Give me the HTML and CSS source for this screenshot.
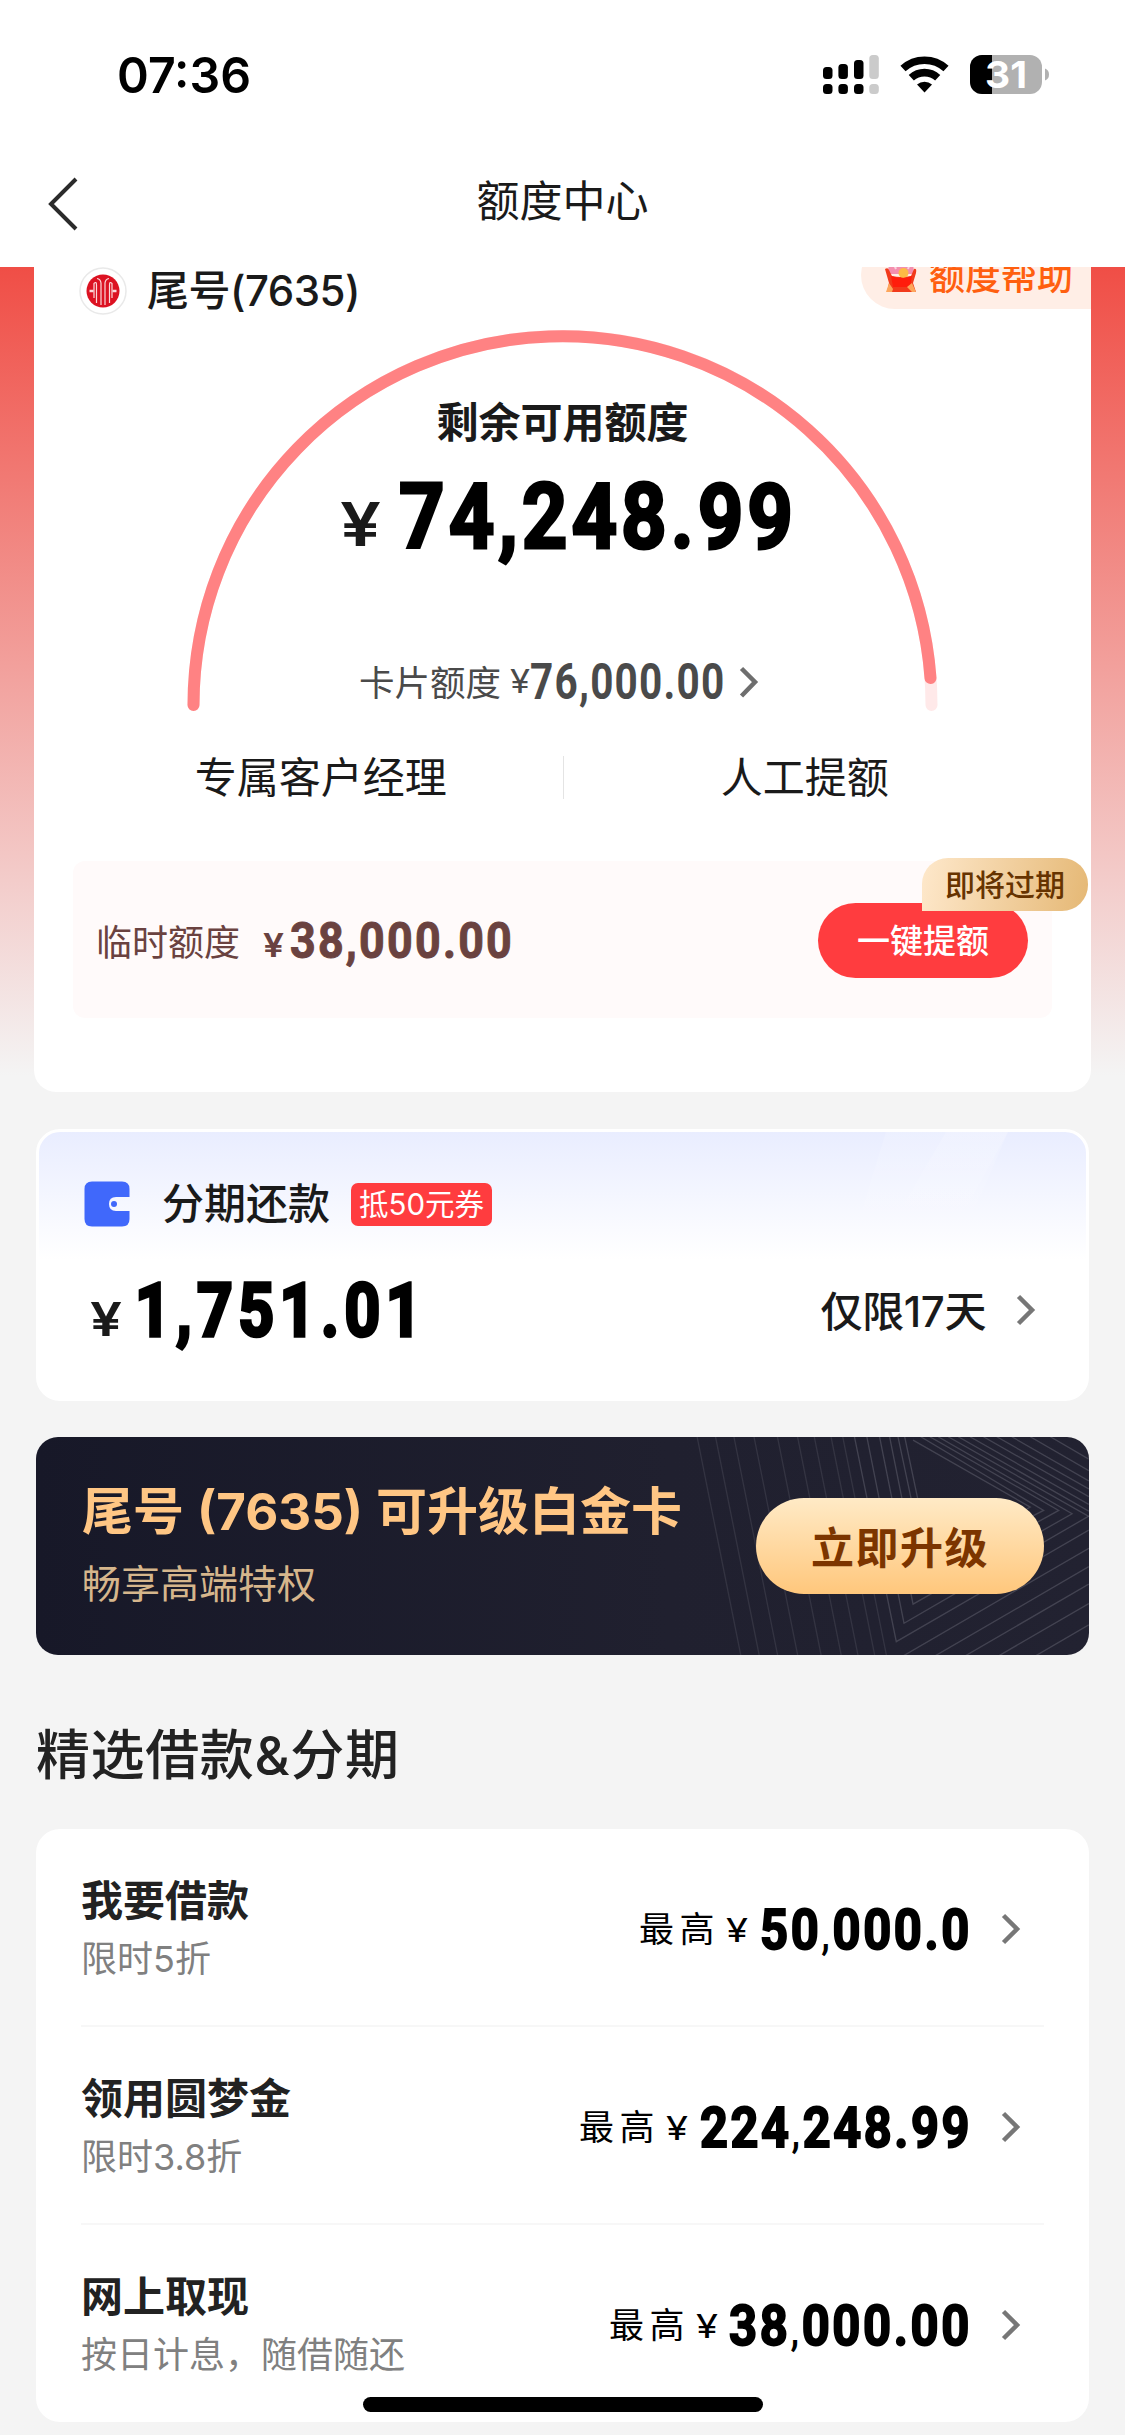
FILE: index.html
```html
<!DOCTYPE html>
<html lang="zh-CN">
<head>
<meta charset="utf-8">
<title>额度中心</title>
<link rel="stylesheet" href="styles.css">
</head>
<body>
<header class="top">
  <div class="status">
    <svg class="clock" width="140" height="60" viewBox="0 0 140 60"><text class="sf" x="2" y="48" font-size="50" font-weight="600" textLength="134" lengthAdjust="spacingAndGlyphs">07:36</text></svg>
    <svg class="indicators" width="232" height="48" viewBox="820 50 232 48">
      <g fill="#000">
        <rect x="823" y="67" width="9.5" height="12" rx="3.5"/><rect x="838.4" y="64" width="9.5" height="15" rx="3.5"/><rect x="854" y="60" width="9.5" height="19" rx="3.5"/>
        <rect x="823" y="84" width="9.5" height="10" rx="3.5"/><rect x="838.4" y="84" width="9.5" height="10" rx="3.5"/><rect x="854" y="84" width="9.5" height="10" rx="3.5"/>
      </g>
      <g fill="#cbcbcb"><rect x="869.3" y="55" width="9.5" height="24" rx="3.5"/><rect x="869.3" y="84" width="9.5" height="10" rx="3.5"/></g>
      <g fill="none" stroke="#000" stroke-width="7.6"><path d="M903 68.5A32 32 0 0 1 946 68.5"/><path d="M911.3 77.8A19.5 19.5 0 0 1 937.700 77.800"/></g>
      <path d="M917 84.500A11.500 11.500 0 0 1 932 84.500L924.500 92.500Z"/>
      <clipPath id="cell"><rect x="970" y="55" width="72" height="39" rx="12"/></clipPath>
      <g clip-path="url(#cell)"><rect x="970" y="55" width="72" height="39" fill="#b1b1b1"/><rect x="970" y="55" width="22" height="39"/></g>
      <path d="M1045 68.500Q1049 70 1049 74.500T1045 80.500Z" fill="#b1b1b1"/>
      <text class="sf" x="985" y="88" font-size="37" font-weight="700" fill="#fff" textLength="42" lengthAdjust="spacingAndGlyphs">31</text>
    </svg>
  </div>
  <nav class="nav">
    <svg class="back" width="34" height="58" viewBox="0 0 34 58"><path d="M31 4 6 29 31 54" fill="none" stroke="#2b2b2b" stroke-width="4"/></svg>
    <h1 class="nav-title">额度中心</h1>
  </nav>
</header>

<main>
  <section class="hero">
    <div class="card credit">
      <div class="account">
        <svg class="logo" width="48" height="48" viewBox="0 0 48 48">
          <circle cx="24" cy="24" r="23" fill="#fff" stroke="#e9e9e9" stroke-width="1.500"/>
          <circle cx="24" cy="24" r="16.500" fill="#dc1222"/>
          <g fill="none" stroke="#fbd9db" stroke-width="1.200"><path d="M17.500 36V18Q17.500 14 15 16.500V31"/><path d="M22 38V16Q21.500 12 18 11.500"/><path d="M26 38V16Q26.500 12 30 11.500"/><path d="M30.500 36V18Q30.500 14 33 16.500V31"/><path d="M10.500 24h4M33.500 24h4" stroke-width="2.500"/></g>
        </svg>
        <span class="account-name">尾号(7635)</span>
        <a class="help">
          <svg width="32" height="32" viewBox="0 0 32 32">
            <path d="M4 0H28L29 13H3Z" fill="#f48fae"/><path d="M8 1l3 7M14 0v6M26 0l-3 8" stroke="#fbd3de" stroke-width="2"/>
            <path d="M0 8Q3 6 4 9L7 15Q16 17 26 15L29 8Q32 7 31 12L28 22L31 31H2L4 22Z" fill="#f23a1c"/>
            <circle cx="18.500" cy="12" r="5" fill="#fdbb45"/><path d="M6 15Q17 19 27 15L25 26H8Z" fill="#ff1d0c"/><path d="M1 31 4 22 8 28 7 31ZM31 31 27 22 22 26 27 31Z" fill="#fda65c"/>
          </svg>
          <span>额度帮助</span>
        </a>
      </div>
      <div class="gauge">
        <svg class="gauge-arc" width="1057" height="406" viewBox="34 314 1057 406">
          <g fill="none" stroke-width="12" stroke-linecap="round"><path d="M193.500 705A369 369 0 0 1 931.500 705" stroke="#ffe9e9"/><path d="M193.500 705A369 369 0 0 1 930.500 678" stroke="#ff8283"/></g>
        </svg>
        <div class="gauge-body">
          <div class="gauge-title">剩余可用额度</div>
          <svg class="amount-main" width="470" height="90" viewBox="330 471 470 90"><text class="sf" x="340" y="546" font-size="60" font-weight="600" fill="#1a1a1a" textLength="41" lengthAdjust="spacingAndGlyphs">¥</text><text class="din heavy" x="399" y="548" font-size="91" stroke-width="3" letter-spacing="4.500" textLength="398" lengthAdjust="spacingAndGlyphs">74,248.99</text></svg>
          <div class="limit">
            <span>卡片额度</span>
            <svg width="260" height="60" viewBox="506 652 260 60"><text class="sf" x="510" y="693" font-size="32" fill="#4a4a4a" textLength="20" lengthAdjust="spacingAndGlyphs">¥</text><text class="din" x="530" y="699" font-size="49.500" fill="#4a4a4a" letter-spacing="1.500" textLength="195.500" lengthAdjust="spacingAndGlyphs">76,000.00</text><path d="M741.500 668.500 755 682 741.500 696" fill="none" stroke="#6e6e6e" stroke-width="4.500"/></svg>
          </div>
        </div>
      </div>
      <div class="tabs"><a class="tab">专属客户经理</a><a class="tab">人工提额</a></div>
      <div class="temp">
        <span class="temp-label">临时额度</span>
        <svg width="256" height="60" viewBox="260 911 256 60"><text class="sf" x="263" y="957" font-size="33" font-weight="600" fill="#6a4240" textLength="21" lengthAdjust="spacingAndGlyphs">¥</text><text class="din heavy" x="290" y="957.500" font-size="50" stroke-width="1" letter-spacing="2.500" textLength="224" lengthAdjust="spacingAndGlyphs">38,000.00</text></svg>
        <button class="raise">一键提额</button>
        <span class="expiring">即将过期</span>
      </div>
    </div>
  </section>

  <section class="card instalment">
    <svg class="shine" width="300" height="130" viewBox="0 0 300 130"><defs><linearGradient id="ray" x1="0" y1="0" x2="0" y2="1"><stop offset="0" stop-color="#fff" stop-opacity=".16"/><stop offset="1" stop-color="#fff" stop-opacity="0"/></linearGradient></defs><path d="M100 0H222L150 130H60Z" fill="url(#ray)"/><path d="M160 0H222L170 120H90Z" fill="url(#ray)"/></svg>
    <div class="inst-head">
      <svg width="46" height="46" viewBox="0 0 46 46"><path d="M8 .5H38Q45.500 .5 45.500 8V16H32Q25 16 25 23T32 30H45.500V38Q45.500 45.500 38 45.500H8Q.5 45.500 .5 38V8Q.5 .5 8 .5Z" fill="#4068fb"/><circle cx="30" cy="23" r="3" fill="#4068fb"/></svg>
      <h2 class="inst-title">分期还款</h2>
      <span class="coupon">抵50元券</span>
    </div>
    <div class="inst-foot">
      <svg width="340" height="90" viewBox="84 1265 340 90"><text class="sf" x="90" y="1336" font-size="47" font-weight="600" fill="#1a1a1a" textLength="32" lengthAdjust="spacingAndGlyphs">¥</text><text class="din heavy" x="135" y="1336" font-size="74" stroke-width="3.500" letter-spacing="6.500" textLength="292" lengthAdjust="spacingAndGlyphs">1,751.01</text></svg>
      <span class="days">仅限17天</span>
      <svg class="chev" width="20" height="36" viewBox="0 0 20 36"><path d="M2.500 4.500 16 18 2.500 31.500" fill="none" stroke="#777" stroke-width="4.500"/></svg>
    </div>
  </section>

  <section class="upgrade">
    <svg class="weave" width="1053" height="218" viewBox="0 0 1053 218">
      <g transform="translate(564 -17) scale(.3348)" fill="none" stroke="#8a8a94" stroke-opacity=".32" stroke-width="4">
        <path stroke-opacity=".18" d="M290 50 421 705M345 50 476 705M400 50 531 705M460 50 591 705M530 50 661 705M590 50 721 705M640 50 771 705M690 50 821 705M725 50 856 705"/>
        <path d="M760 50 885 662 1460 329M797 50 908 607 1460 287M835 50 935 550 1410 280 1010 50M865 50 955 500 1370 270 985 50M890 50 975 450 1325 270 958 50M910 50 990 430 1285 260 935 60"/>
        <path d="M905 705 1460 383M1000 705 1460 438M1090 705 1460 490M1190 705 1460 548M1300 705 1460 612"/>
        <path d="M1040 50 1460 288M1070 50 1460 272M1105 50 1460 252M1145 50 1460 229M1185 50 1460 206M1230 50 1460 182M1285 50 1460 151M1345 50 1460 117"/>
      </g>
    </svg>
    <div class="upgrade-text">
      <h2 class="upgrade-title">尾号 (7635) 可升级白金卡</h2>
      <p class="upgrade-sub">畅享高端特权</p>
    </div>
    <button class="upgrade-btn">立即升级</button>
  </section>

  <h2 class="section-title">精选借款&amp;分期</h2>

  <section class="list">
    <div class="row">
      <div><h3 class="row-title">我要借款</h3><p class="row-sub">限时5折</p></div>
      <div class="row-end"><span class="most">最高</span>
        <svg width="244" height="60" viewBox="725 1898 244 60"><text class="sf" x="726" y="1941" font-size="33" textLength="22" lengthAdjust="spacingAndGlyphs">¥</text><text class="din heavy" x="760" y="1947.500" font-size="56" stroke-width="2" letter-spacing="3" textLength="212" lengthAdjust="spacingAndGlyphs">50<tspan class="sep">,</tspan>000.0</text></svg>
        <svg class="chev" width="20" height="36" viewBox="0 0 20 36"><path d="M2.500 4.500 16 18 2.500 31.500" fill="none" stroke="#777" stroke-width="4.500"/></svg></div>
    </div>
    <div class="row">
      <div><h3 class="row-title">领用圆梦金</h3><p class="row-sub">限时3.8折</p></div>
      <div class="row-end"><span class="most">最高</span>
        <svg width="304" height="60" viewBox="665 1898 304 60"><text class="sf" x="666" y="1941" font-size="33" textLength="22" lengthAdjust="spacingAndGlyphs">¥</text><text class="din heavy" x="700" y="1947.500" font-size="56" stroke-width="2" letter-spacing="3" textLength="272" lengthAdjust="spacingAndGlyphs">224<tspan class="sep">,</tspan>248.99</text></svg>
        <svg class="chev" width="20" height="36" viewBox="0 0 20 36"><path d="M2.500 4.500 16 18 2.500 31.500" fill="none" stroke="#777" stroke-width="4.500"/></svg></div>
    </div>
    <div class="row">
      <div><h3 class="row-title">网上取现</h3><p class="row-sub">按日计息，随借随还</p></div>
      <div class="row-end"><span class="most">最高</span>
        <svg width="274" height="60" viewBox="695 1898 274 60"><text class="sf" x="696" y="1941" font-size="33" textLength="22" lengthAdjust="spacingAndGlyphs">¥</text><text class="din heavy" x="729" y="1947.500" font-size="56" stroke-width="2" letter-spacing="3" textLength="243" lengthAdjust="spacingAndGlyphs">38<tspan class="sep">,</tspan>000.00</text></svg>
        <svg class="chev" width="20" height="36" viewBox="0 0 20 36"><path d="M2.500 4.500 16 18 2.500 31.500" fill="none" stroke="#777" stroke-width="4.500"/></svg></div>
    </div>
  </section>
</main>
<div class="home-bar"></div>
</body>
</html>
```
FILE: styles.css
```css
* { box-sizing: border-box; margin: 0; padding: 0; }
body {
  position: relative; width: 1125px; height: 2435px; overflow: hidden;
  background: #f4f4f4; color: #1a1a1a;
  font-family: Inter, "Noto Sans CJK SC", sans-serif; font-size: 36px;
}
svg { display: block; flex: none; overflow: visible; }
h1, h2, h3 { font-weight: 500; }
button { border: 0; font-family: inherit; }
.sf { font-family: Inter, sans-serif; }
.din { font-family: Roboto, sans-serif; font-weight: 700; }
.heavy { fill: currentColor; stroke: currentColor; }
.sep { font-size: 44px; font-weight: 500; stroke: none; }

.top { position: relative; z-index: 1; height: 267px; background: #fff; }
.status { display: flex; justify-content: space-between; padding: 45px 73px 0 115px; height: 136px; }
.indicators { margin-top: 5px; }
.nav { display: flex; align-items: center; height: 131px; padding-left: 45px; }
.back { margin-top: 5px; }
.nav-title { flex: 1; margin: 0 78px 0 -1px; padding-bottom: 2px; text-align: center; font-size: 43px; font-weight: 400; line-height: 60px; }

.hero { height: 825px; padding: 0 34px; background: linear-gradient(#f04e46, #f4f4f4 98%); }
.card { background: #fff; border-radius: 24px; }
.credit { height: 825px; border-radius: 0 0 22px 22px; }
.account { display: flex; align-items: center; height: 47px; padding-left: 45px; }
.account-name { margin-left: 20px; font-size: 42px; line-height: 56px; font-weight: 500; letter-spacing: -.5px; }
.help {
  display: flex; align-items: center; gap: 12px; width: 230px; height: 68px; margin: -31px 0 0 auto; padding: 0 0 2px 24px;
  border-radius: 34px 0 0 34px; background: #ffeee6; color: #ff5f0f; font-size: 36px; font-weight: 500;
}
.help svg { margin-top: 5px; }

.gauge { display: grid; height: 406px; }
.gauge > * { grid-area: 1 / 1; }
.gauge-body { display: flex; flex-direction: column; align-items: center; padding-top: 79px; }
.gauge-title { font-size: 42px; font-weight: 700; line-height: 60px; }
.amount-main { margin-top: 18px; margin-left: 5px; color: #000; }
.limit { display: flex; align-items: center; width: 407px; height: 60px; margin-top: 91px; color: #4a4a4a; }
.limit span { width: 147px; padding-bottom: 3px; font-size: 35.5px; }

.tabs { display: grid; grid-template-columns: 1fr 1fr; margin: 36px 45px 0; }
.tab { height: 43px; font-size: 42px; line-height: 44px; text-align: center; }
.tab + .tab { border-left: 1.5px solid #e4e4e4; }

.temp {
  position: relative; display: flex; align-items: center; width: 979px; height: 157px; margin: 62px 0 0 39px; padding: 2px 24px 0 23px;
  border-radius: 12px; background: #fffafa; color: #6a4240;
}
.temp-label { width: 164px; padding-bottom: 2px; font-size: 36px; }
.raise { width: 210px; height: 75px; margin-left: auto; padding-bottom: 3px; border-radius: 38px; background: #ff3c3f; color: #fff; font-size: 33px; font-weight: 500; }
.expiring {
  position: absolute; top: -3px; right: -36px; width: 166px; height: 53px;
  border-radius: 26px 26px 26px 0; background: linear-gradient(100deg, #fee8cb, #e5b875);
  color: #663300; font-size: 30px; font-weight: 500; line-height: 54px; text-align: center;
}

.instalment {
  position: relative; height: 272px; margin: 37px 36px 0; padding: 49px 50px 0 45px; border: 3px solid #fff;
  background: linear-gradient(#e9edff, #fff 48%);
}
.shine { position: absolute; top: 0; right: 0; }
.inst-head { display: flex; align-items: center; height: 46px; }
.inst-title { margin-left: 32px; font-size: 42px; line-height: 46px; }
.coupon { width: 141px; height: 43px; margin-left: 21px; border-radius: 7px; background: #ff3c3f; color: #fff; font-size: 29.5px; line-height: 42px; text-align: center; }
.inst-foot { display: flex; align-items: center; height: 90px; margin-top: 38px; color: #000; }
.days { margin-left: auto; padding-bottom: 4px; color: #1a1a1a; font-size: 42px; font-weight: 500; letter-spacing: -.4px; }
.inst-foot .chev { margin: 0 0 0 30px; }

.upgrade {
  position: relative; display: flex; justify-content: space-between; height: 218px; margin: 36px 36px 0; padding: 0 45px 0 46px;
  border-radius: 22px; overflow: hidden; background: linear-gradient(90deg, #171828, #20202f 60%, #222231);
}
.weave { position: absolute; inset: 0; }
.upgrade-text, .upgrade-btn { position: relative; }
.upgrade-title { margin-top: 40px; color: #ffc684; font-size: 51px; font-weight: 700; line-height: 70px; white-space: nowrap; word-spacing: 1px; }
.upgrade-sub { margin-top: 10px; color: #d6b68c; font-size: 39px; line-height: 54px; }
.upgrade-btn {
  width: 288px; height: 96px; margin-top: 61px; padding-bottom: 3px; border-radius: 48px; background: linear-gradient(#ffeac6, #ffc77c);
  color: #7c3500; font-size: 43px; font-weight: 700; letter-spacing: 1.5px;
}

.section-title { margin: 65px 36px 0; color: #222; font-size: 54px; line-height: 72px; letter-spacing: .6px; }

.list { height: 593px; margin: 37px 36px 0; border-radius: 24px; background: #fff; }
.row { display: flex; justify-content: space-between; height: 198px; margin: 0 45px; border-bottom: 2px solid #f7f7f7; }
.row:last-child { border-bottom-color: transparent; }
.row-title { margin-top: 42px; color: #222; font-size: 42px; font-weight: 700; line-height: 60px; }
.row-sub { margin-top: 2px; color: #808080; font-size: 36px; line-height: 52px; }
.row-end { display: flex; align-items: center; padding-top: 3px; color: #000; }
.most { margin-right: 5px; padding-bottom: 4px; font-size: 35px; letter-spacing: 5.5px; }
.row-end .chev { margin: 0 23px 0 32px; }
.home-bar { position: absolute; left: 363px; bottom: 23px; width: 400px; height: 15px; border-radius: 8px; background: #000; }
```
